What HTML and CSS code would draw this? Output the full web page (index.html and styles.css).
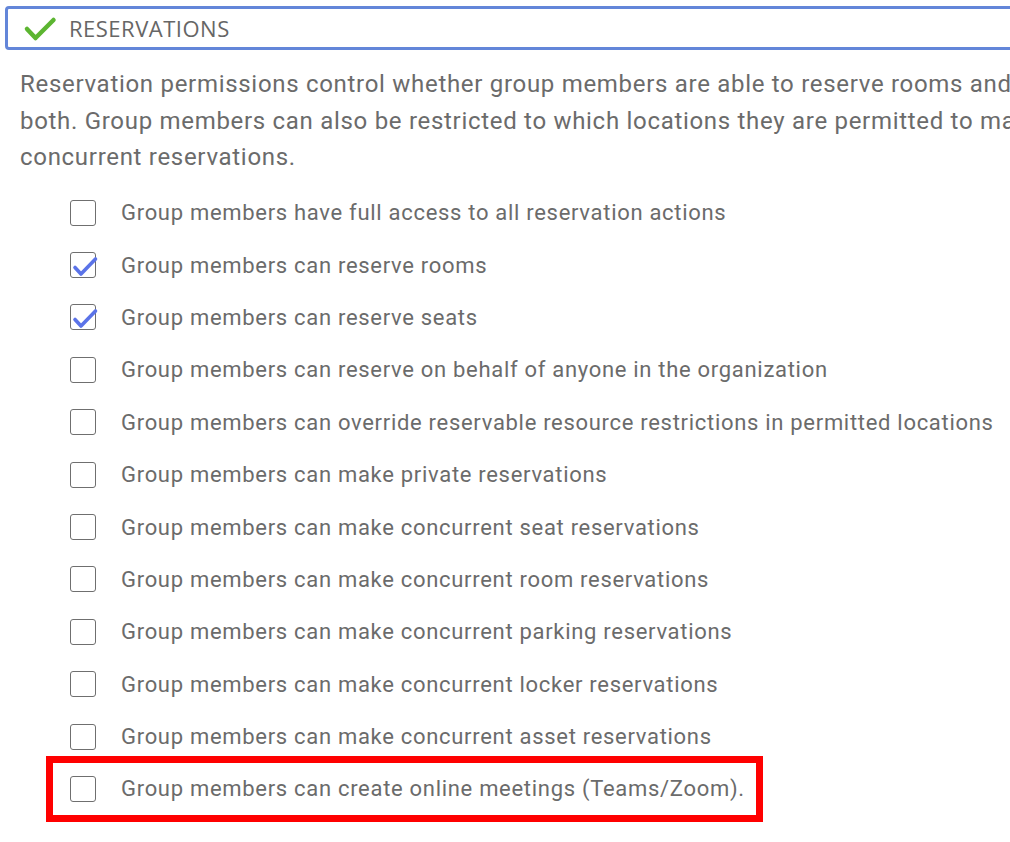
FILE: index.html
```html
<!DOCTYPE html>
<html>
<head>
<meta charset="utf-8">
<link rel="stylesheet" href="styles.css">
</head>
<body>
<div class="page">
  <div class="section-header">
    <svg class="ok-icon" width="34" height="28" viewBox="0 0 34 28"><path d="M4 14 L12.5 23 L30.5 5" fill="none" stroke="#5cb531" stroke-width="4.5" stroke-linecap="round" stroke-linejoin="round"/></svg>
    <span class="section-title">RESERVATIONS</span>
  </div>
  <p class="intro">Reservation permissions control whether group members are able to reserve rooms and seats, or both. Group members can also be restricted to which locations they are permitted to make concurrent reservations.</p>
  <ul class="perm-list">
    <li class="perm"><span class="cb"></span><span class="label">Group members have full access to all reservation actions</span></li>
    <li class="perm"><span class="cb checked"><svg width="28" height="28" viewBox="0 0 28 28"><path d="M4 14.5 L10 21 L24.5 6" fill="none" stroke="#5b73e8" stroke-width="3.6" stroke-linecap="round" stroke-linejoin="round"/></svg></span><span class="label">Group members can reserve rooms</span></li>
    <li class="perm"><span class="cb checked"><svg width="28" height="28" viewBox="0 0 28 28"><path d="M4 14.5 L10 21 L24.5 6" fill="none" stroke="#5b73e8" stroke-width="3.6" stroke-linecap="round" stroke-linejoin="round"/></svg></span><span class="label">Group members can reserve seats</span></li>
    <li class="perm"><span class="cb"></span><span class="label">Group members can reserve on behalf of anyone in the organization</span></li>
    <li class="perm"><span class="cb"></span><span class="label">Group members can override reservable resource restrictions in permitted locations</span></li>
    <li class="perm"><span class="cb"></span><span class="label">Group members can make private reservations</span></li>
    <li class="perm"><span class="cb"></span><span class="label">Group members can make concurrent seat reservations</span></li>
    <li class="perm"><span class="cb"></span><span class="label">Group members can make concurrent room reservations</span></li>
    <li class="perm"><span class="cb"></span><span class="label">Group members can make concurrent parking reservations</span></li>
    <li class="perm"><span class="cb"></span><span class="label">Group members can make concurrent locker reservations</span></li>
    <li class="perm"><span class="cb"></span><span class="label">Group members can make concurrent asset reservations</span></li>
    <li class="perm highlighted"><span class="cb"></span><span class="label">Group members can create online meetings (Teams/Zoom).</span></li>
  </ul>
</div>
</body>
</html>
```

FILE: styles.css
```css
html, body {
  margin: 0;
  padding: 0;
  background: #ffffff;
  overflow: hidden;
}

.page {
  width: 1010px;
  height: 842px;
  overflow: hidden;
  position: relative;
}

.section-header {
  margin: 6px 0 0 5px;
  width: 1100px;
  height: 44px;
  box-sizing: border-box;
  border: 3px solid #6386d9;
  border-radius: 4px;
  display: flex;
  align-items: center;
}

.ok-icon {
  margin-left: 15px;
  margin-top: 1px;
}

.section-title {
  margin-left: 12px;
  font-family: "Open Sans", "Liberation Sans", sans-serif;
  font-size: 22px;
  letter-spacing: 0.5px;
  color: #666666;
}

.intro {
  margin: 16px 0 0 20px;
  width: 1120px;
  font-family: Roboto, "Liberation Sans", sans-serif;
  font-size: 24px;
  letter-spacing: 0.7px;
  line-height: 36.5px;
  color: #6b6b6b;
}

.perm-list {
  list-style: none;
  margin: 11px 0 0 0;
  padding: 0;
}

.perm {
  display: flex;
  align-items: center;
  height: 52.4px;
  padding-left: 70px;
  box-sizing: border-box;
}

.cb {
  position: relative;
  width: 26px;
  height: 26px;
  box-sizing: border-box;
  border: 1.5px solid #6f6f6f;
  border-radius: 3px;
  flex: none;
}

.cb svg {
  position: absolute;
  left: 0;
  top: 0;
}

.label {
  margin-left: 25px;
  font-family: Roboto, "Liberation Sans", sans-serif;
  font-size: 22px;
  letter-spacing: 0.7px;
  color: #6b6b6b;
  white-space: nowrap;
}

.perm.highlighted {
  margin: -7px 0 0 46px;
  width: 717px;
  height: 66.4px;
  border: 7px solid #ff0000;
  padding-left: 17px;
}
```
